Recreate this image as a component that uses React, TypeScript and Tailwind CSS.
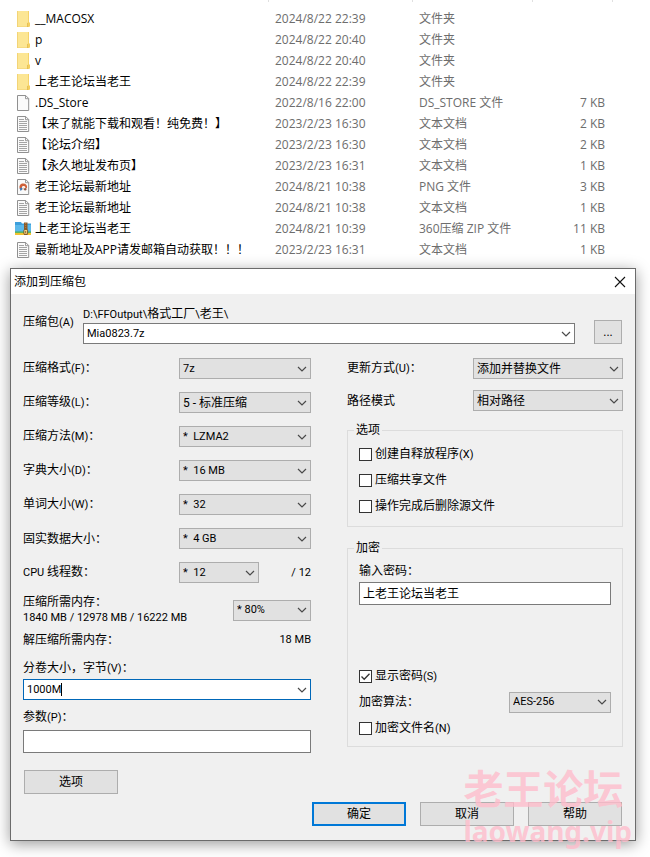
import { useState } from "react";
import type { ReactNode } from "react";

type IconKind = "folder" | "blank" | "text" | "png" | "zip";

const FILES: { icon: IconKind; name: string; date: string; type: string; size?: string }[] = [
  { icon: "folder", name: "__MACOSX", date: "2024/8/22 22:39", type: "文件夹" },
  { icon: "folder", name: "p", date: "2024/8/22 20:40", type: "文件夹" },
  { icon: "folder", name: "v", date: "2024/8/22 20:40", type: "文件夹" },
  { icon: "folder", name: "上老王论坛当老王", date: "2024/8/22 22:39", type: "文件夹" },
  { icon: "blank", name: ".DS_Store", date: "2022/8/16 22:00", type: "DS_STORE 文件", size: "7 KB" },
  { icon: "text", name: "【来了就能下载和观看！纯免费！】", date: "2023/2/23 16:30", type: "文本文档", size: "2 KB" },
  { icon: "text", name: "【论坛介绍】", date: "2023/2/23 16:30", type: "文本文档", size: "2 KB" },
  { icon: "text", name: "【永久地址发布页】", date: "2023/2/23 16:31", type: "文本文档", size: "1 KB" },
  { icon: "png", name: "老王论坛最新地址", date: "2024/8/21 10:38", type: "PNG 文件", size: "3 KB" },
  { icon: "text", name: "老王论坛最新地址", date: "2024/8/21 10:38", type: "文本文档", size: "1 KB" },
  { icon: "zip", name: "上老王论坛当老王", date: "2024/8/21 10:39", type: "360压缩 ZIP 文件", size: "11 KB" },
  { icon: "text", name: "最新地址及APP请发邮箱自动获取！！！", date: "2023/2/23 16:31", type: "文本文档", size: "1 KB" },
];

function FileIcon({ kind }: { kind: IconKind }) {
  if (kind === "folder") {
    return (
      <svg className="block size-4" viewBox="0 0 16 16" aria-hidden="true">
        <path d="M2 0h12v16H2z" fill="#fce694" />
        <path d="M2 0h.8v16H2zM2 15.4h12v.6H2z" fill="#f0d070" />
        <path d="M13.2 0h.8v11l1 1v3.2l-.9.8h-1.6v-4l.7-1z" fill="#f3cf60" />
        <path d="M12.5 12v4" stroke="#dcae3c" strokeWidth=".6" />
      </svg>
    );
  }
  if (kind === "zip") {
    return (
      <svg className="block size-4" viewBox="0 0 16 16" aria-hidden="true">
        <path d="M0 1h6l1 1.6h9V14H0z" fill="#3d9fdc" />
        <path d="M0 4h16v6.5H0z" fill="#5bb8ea" />
        <path d="M0 10.5h16v1.5H0z" fill="#5fb85e" />
        <path d="M0 12h16v2H0z" fill="#f1c232" />
        <path d="M9 1.5h3.5V14H9z" fill="#8a5a2b" />
        <path d="M10.7 2v7" stroke="#c08b4a" strokeWidth=".8" strokeDasharray="1 1" />
        <rect x="8.9" y="8.6" width="3.7" height="4.6" rx=".6" fill="#ffe08a" stroke="#6b4218" strokeWidth=".8" />
        <path d="M10.7 10v2" stroke="#6b4218" strokeWidth=".8" />
      </svg>
    );
  }
  return (
    <svg className="block size-4" viewBox="0 0 16 16" aria-hidden="true">
      <path d="M2.5.5h8.2l3 3v12H2.5z" fill="#fafafa" stroke="#909090" />
      <path d="M10.5.5v3.2h3.2" fill="none" stroke="#909090" strokeWidth=".9" />
      {kind === "text" && (
        <path d="M4 3.5h5M4 5.5h8M4 7.5h8M4 9.5h8M4 11.5h8M4 13.5h8" stroke="#9a9a9a" strokeWidth=".9" />
      )}
      {kind === "png" && (
        <>
          <path d="M4.6 9.5c-.6-3.2 1-5 3.6-5 2.7 0 4.2 1.8 3.9 4-.3 1.5-1.7 1.3-1.8.1-.2-1.2-1-1.7-2-1.5-1.3.2-1.6 1.2-1.4 2.6z" fill="#cf6038" />
          <path d="M4.6 9.2l2.3-.8.9 1.6-2.2 2z" fill="#3f78b5" />
          <path d="M8 8.6l1.6.4-.4 2-1.6-.6z" fill="#f0c9ad" />
          <circle cx="10.2" cy="10.2" r="1.2" fill="#8c5a4a" />
        </>
      )}
    </svg>
  );
}

function Chevron() {
  return (
    <svg className="pointer-events-none size-3 shrink-0" viewBox="0 0 12 12" fill="none" aria-hidden="true">
      <path d="M2 4l4 4 4-4" stroke="#4a4a4a" strokeWidth="1.2" />
    </svg>
  );
}

const LATIN = "text-[11px]";

function Caption({ text, hotkey, colon = true }: { text: ReactNode; hotkey?: string; colon?: boolean }) {
  return (
    <>
      {text}
      {hotkey && <span className={LATIN}>({hotkey})</span>}
      {colon && "："}
    </>
  );
}

function Dropdown({ id, value, className, label }: { id: string; value: string; className: string; label?: string }) {
  return (
    <div className={`grid h-[21px] items-center border border-[#adadad] bg-[#e1e1e1] ${className}`}>
      <select
        id={id}
        aria-label={label}
        defaultValue={value}
        className="col-start-1 row-start-1 h-full w-full appearance-none bg-transparent pl-[3px] pr-5 leading-4 outline-none"
      >
        <option className="whitespace-pre">{value}</option>
      </select>
      <span className="pointer-events-none col-start-1 row-start-1 mr-[2px] justify-self-end">
        <Chevron />
      </span>
    </div>
  );
}

function Row({ id, text, hotkey, colon, value, size }: { id: string; text: ReactNode; hotkey?: string; colon?: boolean; value: string; size: string }) {
  return (
    <div className="flex items-center justify-between">
      <label htmlFor={id}>
        <Caption text={text} hotkey={hotkey} colon={colon} />
      </label>
      <Dropdown id={id} value={value} className={size} />
    </div>
  );
}

function Check({ text, hotkey, initial = false }: { text: string; hotkey?: string; initial?: boolean }) {
  const [on, setOn] = useState(initial);
  return (
    <label className="flex h-[26px] items-center gap-[3px]">
      <span className="grid size-[13px] shrink-0">
        <input
          type="checkbox"
          checked={on}
          onChange={() => setOn(!on)}
          className="col-start-1 row-start-1 size-[13px] appearance-none border border-[#333333] bg-white"
        />
        {on && (
          <svg className="pointer-events-none col-start-1 row-start-1 size-[13px]" viewBox="0 0 13 13" fill="none" aria-hidden="true">
            <path d="M2.5 6.5l2.7 2.8 5.3-5.6" stroke="#333333" strokeWidth="1.3" />
          </svg>
        )}
      </span>
      <span>
        <Caption text={text} hotkey={hotkey} colon={false} />
      </span>
    </label>
  );
}

function PushButton({ children, primary = false }: { children: ReactNode; primary?: boolean }) {
  return (
    <button
      type="button"
      className={`h-6 w-[94px] bg-[#e1e1e1] leading-4 ${primary ? "border-2 border-[#0078d7]" : "border border-[#adadad]"}`}
    >
      {children}
    </button>
  );
}

export default function App() {
  return (
    <div
      lang="zh-CN"
      className="relative overflow-hidden bg-white pb-4 text-[12px] leading-4 text-black"
    >
      <div className="flex h-2 items-start" aria-hidden="true">
        <span className="h-[2px] w-[269px] border-r border-[#e0e0e0]" />
        <span className="h-[2px] w-36 border-r border-[#e0e0e0]" />
        <span className="h-[2px] w-[120px] border-r border-[#e0e0e0]" />
        <span className="h-[2px] w-20 border-r border-[#e0e0e0]" />
      </div>
      <table className="w-full table-fixed border-collapse font-['Open_Sans','Noto_Sans_CJK_SC',sans-serif]">
        <colgroup>
          <col className="w-[275px]" />
          <col className="w-36" />
          <col className="w-[120px]" />
          <col />
        </colgroup>
        <tbody>
          {FILES.map((f, i) => (
            <tr key={i} className="h-[21px] text-[#6d6d6d]">
              <td className="p-0">
                <div className="flex items-center gap-1 pl-[15px] whitespace-nowrap text-black">
                  <FileIcon kind={f.icon} />
                  {f.name}
                </div>
              </td>
              <td className="p-0 whitespace-nowrap">{f.date}</td>
              <td className="p-0 whitespace-nowrap">{f.type}</td>
              <td className="py-0 pr-[45px] text-right whitespace-nowrap">{f.size}</td>
            </tr>
          ))}
        </tbody>
      </table>

      <section
        aria-label="添加到压缩包"
        className="mt-2 mr-[14px] ml-[10px] border border-[#6b6b6b] bg-[#f0f0f0] font-[Roboto,'Noto_Sans_CJK_SC',sans-serif] shadow-[0_3px_14px_rgba(0,0,0,0.4)]"
      >
        <header className="flex h-[25px] items-center justify-between bg-white pr-[9px] pl-[3px]">
          <h1>添加到压缩包</h1>
          <button type="button" aria-label="关闭">
            <svg className="size-3" viewBox="0 0 12 12" fill="none" aria-hidden="true">
              <path d="M1 1l10 10M11 1L1 11" stroke="#111111" strokeWidth="1.1" />
            </svg>
          </button>
        </header>

        <form className="px-3 pt-3 pb-[14px]" onSubmit={(e) => e.preventDefault()}>
          <div className="flex items-end pr-px">
            <label htmlFor="archive" className="w-[60px] self-center pb-[6px]">
              <Caption text="压缩包" hotkey="A" colon={false} />
            </label>
            <div className="min-w-0 flex-1">
              <p className="h-[17px]">
                <span className={LATIN}>D:\FFOutput\</span>格式工厂<span className={LATIN}>\</span>老王
                <span className={LATIN}>\</span>
              </p>
              <div className="flex h-[21px] items-center border border-[#7a7a7a] bg-white pr-[2px]">
                <input id="archive" defaultValue="Mia0823.7z" className={`min-w-0 flex-1 pl-[3px] outline-none ${LATIN}`} />
                <Chevron />
              </div>
            </div>
            <button type="button" aria-label="浏览" className="ml-[19px] h-6 w-7 border border-[#adadad] bg-[#e1e1e1] leading-4">
              ...
            </button>
          </div>

          <div className="mt-[14px] grid grid-cols-[288fr_276fr] gap-9">
            <div className="flex flex-col">
              <div className="flex flex-col gap-[13px]">
                <Row id="format" text="压缩格式" hotkey="F" value="7z" size={`w-[132px] ${LATIN}`} />
                <Row id="level" text="压缩等级" hotkey="L" value="5 - 标准压缩" size="w-[132px]" />
                <Row id="method" text="压缩方法" hotkey="M" value={"*\u00a0 LZMA2"} size={`w-[132px] ${LATIN}`} />
                <Row id="dict" text="字典大小" hotkey="D" value={"*\u00a0 16 MB"} size={`w-[132px] ${LATIN}`} />
                <Row id="word" text="单词大小" hotkey="W" value={"*\u00a0 32"} size={`w-[132px] ${LATIN}`} />
                <Row id="solid" text="固实数据大小" value={"*\u00a0 4 GB"} size={`w-[132px] ${LATIN}`} />
                <div className="flex items-center">
                  <label htmlFor="threads" className="flex-1">
                    <span className={LATIN}>CPU </span>线程数：
                  </label>
                  <Dropdown id="threads" value={"*\u00a0 12"} className={`w-20 ${LATIN}`} />
                  <span className={`w-[52px] text-right ${LATIN}`}>/ 12</span>
                </div>
              </div>
              <div className="mt-[11px] flex items-center justify-between">
                <div>
                  <p>压缩所需内存：</p>
                  <p className={LATIN}>1840 MB / 12978 MB / 16222 MB</p>
                </div>
                <Dropdown id="memory" label="压缩所需内存" value="* 80%" className={`w-[78px] ${LATIN}`} />
              </div>
              <div className="mt-[6px] flex items-center justify-between">
                <span>解压缩所需内存：</span>
                <span className={LATIN}>18 MB</span>
              </div>
              <label htmlFor="volume" className="mt-3 h-4">
                <Caption text="分卷大小，字节" hotkey="V" />
              </label>
              <div className="mt-[3px] flex h-[21px] items-center border border-[#0067b8] bg-white pr-[2px] pl-[3px]">
                <input id="volume" defaultValue="1000M" className={`field-sizing-content caret-transparent outline-none ${LATIN}`} />
                <span className="h-[13px] w-px bg-black" />
                <span className="ml-auto">
                  <Chevron />
                </span>
              </div>
              <label htmlFor="params" className="mt-[9px] h-4">
                <Caption text="参数" hotkey="P" />
              </label>
              <input id="params" className="mt-[5px] h-[23px] w-full border border-[#7a7a7a] bg-white px-1 outline-none" />
              <div className="mt-[17px] pl-px">
                <PushButton>选项</PushButton>
              </div>
            </div>

            <div className="flex flex-col">
              <div className="flex flex-col gap-[11px]">
                <Row id="update" text="更新方式" hotkey="U" value="添加并替换文件" size="w-[150px]" />
                <Row id="paths" text="路径模式" colon={false} value="相对路径" size="w-[150px]" />
              </div>
              <fieldset className="mt-[11px] min-w-0 border border-[#dcdcdc] px-[11px] pt-[3px] pb-[7px]">
                <legend className="-ml-[5px] px-[2px]">选项</legend>
                <Check text="创建自释放程序" hotkey="X" />
                <Check text="压缩共享文件" />
                <Check text="操作完成后删除源文件" />
              </fieldset>
              <fieldset className="mt-[13px] min-w-0 border border-[#dcdcdc] px-[11px] pt-[7px] pb-[5px]">
                <legend className="-ml-[5px] px-[2px]">加密</legend>
                <label htmlFor="password" className="block">
                  输入密码：
                </label>
                <input
                  id="password"
                  defaultValue="上老王论坛当老王"
                  className="mt-[3px] mb-[58px] block h-[23px] w-full border border-[#7a7a7a] bg-white px-[3px] pb-[2px] leading-4 outline-none"
                />
                <Check text="显示密码" hotkey="S" initial />
                <div className="flex h-[26px] flex-col justify-center">
                  <Row id="cipher" text="加密算法" value="AES-256" size={`w-[102px] ${LATIN}`} />
                </div>
                <Check text="加密文件名" hotkey="N" />
              </fieldset>
            </div>
          </div>

          <div className="mt-2 flex justify-end gap-[14px] pr-px">
            <PushButton primary>确定</PushButton>
            <PushButton>取消</PushButton>
            <PushButton>帮助</PushButton>
          </div>
        </form>
      </section>

      <div className="pointer-events-none absolute right-[18px] bottom-[7px] font-['Noto_Sans','Noto_Sans_CJK_SC',sans-serif] font-bold text-[#ffbccb]/80">
        <p className="text-[40px] leading-[46px]">老王论坛</p>
        <p className="text-[28px] leading-[38px]">laowang.vip</p>
      </div>
    </div>
  );
}
